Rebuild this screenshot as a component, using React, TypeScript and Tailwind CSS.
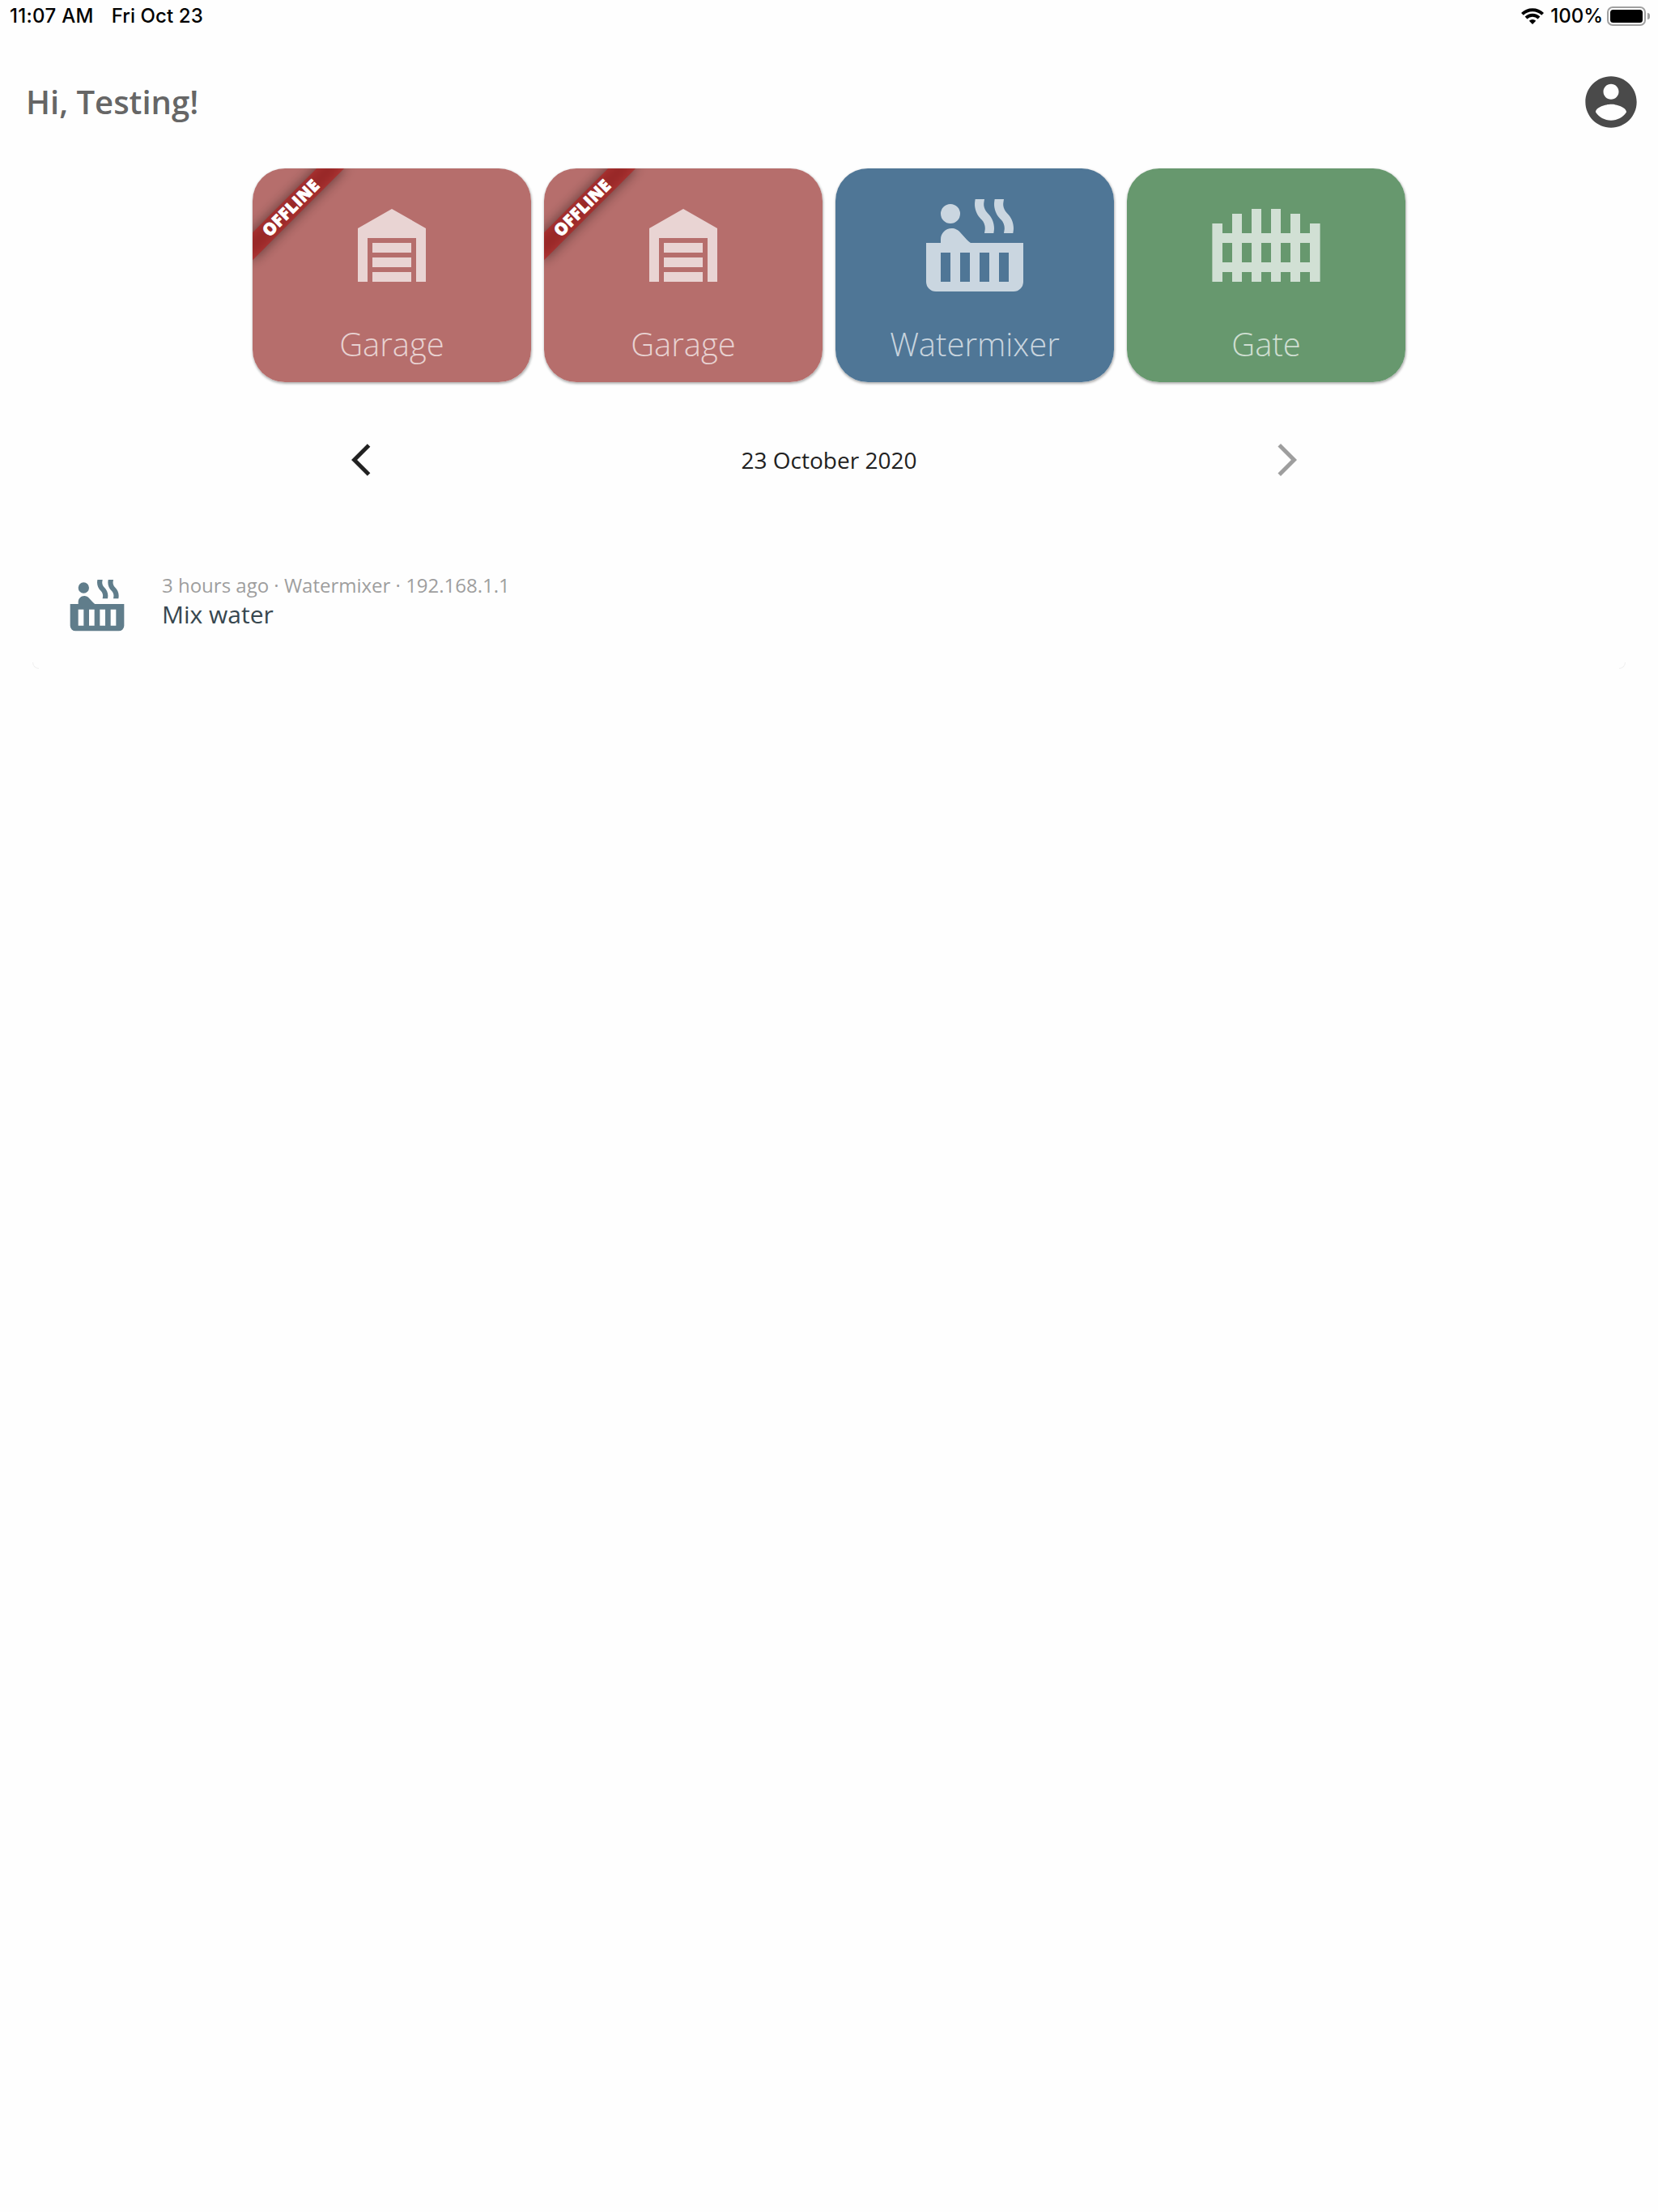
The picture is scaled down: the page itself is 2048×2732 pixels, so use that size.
import React from "react";

const ICONS = {
  garage:
    "M19,20H17V11H7V20H5V9L12,5L19,9V20M8,12H16V14H8V12M8,15H16V17H8V15M16,18V20H8V18H16Z",
  hotTub:
    "M7 4A2 2 0 0 1 9 6A2 2 0 0 1 7 8A2 2 0 0 1 5 6A2 2 0 0 1 7 4M11.15 12H22V20A2 2 0 0 1 20 22H4A2 2 0 0 1 2 20V12H5V11.25C5 10 6 9 7.25 9H7.28C7.62 9 7.95 9.09 8.24 9.23C8.5 9.35 8.74 9.5 8.93 9.73L10.33 11.28C10.56 11.54 10.84 11.78 11.15 12M7 20V14H5V20H7M11 20V14H9V20H11M15 20V14H13V20H15M19 20V14H17V20H19M18.65 5.86C19.68 6.86 20.16 8.21 19.95 9.57L19.89 10H18L18.09 9.41C18.24 8.62 18 7.83 17.42 7.21L17.35 7.15C16.32 6.14 15.85 4.79 16.05 3.43L16.11 3H18L17.91 3.59C17.76 4.38 18 5.17 18.58 5.79L18.65 5.86M14.65 5.86C15.68 6.86 16.16 8.21 15.95 9.57L15.89 10H14L14.09 9.41C14.24 8.62 14 7.83 13.42 7.21L13.35 7.15C12.32 6.14 11.85 4.79 12.05 3.43L12.11 3H14L13.91 3.59C13.76 4.38 14 5.17 14.58 5.79L14.65 5.86Z",
  gate:
    "M9 5V10H7V6H5V10H3V8H.9V20H3V18H5V20H7V18H9V20H11V18H13V20H15V18H17V20H19V18H21V20H23.1V8H21V10H19V6H17V10H15V5H13V10H11V5H9M3 12H5V16H3V12M7 12H9V16H7V12M11 12H13V16H11V12M15 12H17V16H15V12M19 12H21V16H19V12Z",
  account:
    "M12 2C6.48 2 2 6.48 2 12s4.48 10 10 10 10-4.48 10-10S17.52 2 12 2zm0 3c1.66 0 3 1.34 3 3s-1.34 3-3 3-3-1.34-3-3 1.34-3 3-3zm0 14.2c-2.5 0-4.71-1.28-6-3.22.03-1.99 4-3.08 6-3.08 1.99 0 5.97 1.09 6 3.08-1.29 1.94-3.5 3.22-6 3.22z",
  back: "M11.67 3.87L9.9 2.1 0 12l9.9 9.9 1.77-1.77L3.54 12z",
  forward: "M6.23 20.23L8 22l10-10L8 2 6.23 3.77 14.46 12z",
};

function Icon({ name, className }: { name: keyof typeof ICONS; className: string }) {
  return (
    <svg viewBox="0 0 24 24" fill="currentColor" fillRule="evenodd" className={className}>
      <path d={ICONS[name]} />
    </svg>
  );
}

function OfflineRibbon() {
  return (
    <div className="absolute top-[56px] left-[-80px] h-6 w-40 origin-[80px_-56px] -rotate-45">
      <div className="absolute inset-0 bg-black/50 blur-[8px]" />
      <div className="absolute inset-0 flex items-center justify-center bg-[#b71c1c]/63">
        <span className="pr-[2px] pb-px text-[20.4px] leading-none font-extrabold tracking-[0.6px] text-white [-webkit-text-stroke:0.8px_white]">
          OFFLINE
        </span>
      </div>
    </div>
  );
}

interface Device {
  label: string;
  icon: keyof typeof ICONS;
  color: string;
  offline?: boolean;
}

const DEVICES: Device[] = [
  { label: "Garage", icon: "garage", color: "bg-[#b66e6c]", offline: true },
  { label: "Garage", icon: "garage", color: "bg-[#b66e6c]", offline: true },
  { label: "Watermixer", icon: "hotTub", color: "bg-[#4f7696]" },
  { label: "Gate", icon: "gate", color: "bg-[#67986e]" },
];

function DeviceCard({ label, icon, color, offline }: Device) {
  return (
    <div className="h-[264px] w-[344px] rounded-[40px] shadow-[0.5px_1.5px_3px_rgba(0,0,0,0.3)]">
      <div
        className={`relative flex h-full flex-col items-center overflow-hidden rounded-[40px] pt-5 text-white/70 ${color}`}
      >
        <Icon name={icon} className="size-36 shrink-0" />
        <span className="mt-[26px] text-[40px] leading-[54px] font-light whitespace-nowrap">{label}</span>
        {offline && <OfflineRibbon />}
      </div>
    </div>
  );
}

function StatusBar() {
  return (
    <div className="flex h-10 items-center justify-between pr-[10px] pl-3 font-['Inter'] text-[24px] leading-none font-medium text-black">
      <div className="flex gap-[22px]">
        <span className="tracking-[0.3px]">11:07 AM</span>
        <span className="tracking-[0.1px]">Fri Oct 23</span>
      </div>
      <div className="flex items-center">
        <svg viewBox="0 0 28 20" className="mr-2 h-5 w-7" fill="none" stroke="black" strokeWidth="4">
          <path d="M1.4 7.4A18 18 0 0 1 26.6 7.4" />
          <path d="M6 12A11.5 11.5 0 0 1 22 12" />
          <path d="M14 20L9.8 15.8A6 6 0 0 1 18.2 15.8Z" fill="black" stroke="none" />
        </svg>
        <span>100%</span>
        <div className="ml-[5px] flex h-6 w-12 rounded-[7px] border-2 border-[#a0a0a0] p-[2px]">
          <div className="flex-1 rounded-[3.5px] bg-black" />
        </div>
        <div className="ml-[2px] h-2 w-[3px] rounded-r-full bg-[#a0a0a0]" />
      </div>
    </div>
  );
}

export default function App() {
  return (
    <div className="flex h-[2732px] w-[2048px] flex-col bg-[#fefefe] font-['Open_Sans',sans-serif]">
      <StatusBar />
      <header className="flex h-[172px] items-center justify-between pr-5 pl-8">
        <h1 className="text-[40px] leading-none font-semibold text-[#666666]">Hi, Testing!</h1>
        <Icon name="account" className="size-[76px] text-[#4a4a4a]" />
      </header>
      <section className="-mt-1 flex justify-center gap-4">
        {DEVICES.map((d, i) => (
          <DeviceCard key={i} {...d} />
        ))}
      </section>
      <nav className="mt-14 flex h-20 items-center justify-between px-[433.5px]">
        <Icon name="back" className="size-12 text-[#212121]" />
        <span className="text-[28px] leading-none text-[#212121]">23 October 2020</span>
        <Icon name="forward" className="size-12 text-[#9e9e9e]" />
      </nav>
      <article className="relative mx-10 mt-[58px] flex h-[160px] items-center">
        <span className="absolute bottom-0 left-0 size-2 rounded-bl-lg border-b border-l border-[#f0f0f0]" />
        <span className="absolute right-0 bottom-0 size-2 rounded-br-lg border-r border-b border-[#f0f0f0]" />
        <Icon name="hotTub" className="ml-10 size-20 text-[#607d8b]" />
        <div className="mb-[6px] ml-10 flex flex-col">
          <span className="text-[24px] leading-8 text-[#9e9e9e]">3 hours ago · Watermixer · 192.168.1.1</span>
          <span className="text-[30px] leading-[40px] text-[#37474f]">Mix water</span>
        </div>
      </article>
    </div>
  );
}
